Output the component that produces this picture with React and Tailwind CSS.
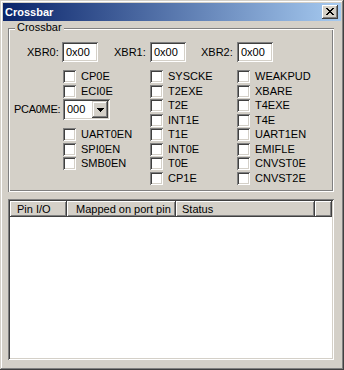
import React from 'react';

const SUNKEN = 'shadow-[inset_1px_1px_#808080,inset_-1px_-1px_#ffffff,inset_2px_2px_#404040,inset_-2px_-2px_#d4d0c8]';

function CloseGlyph() {
  return (
    <svg width="8" height="7" viewBox="0 0 8 7" shapeRendering="crispEdges">
      <g fill="#000">
        <rect x="0" y="0" width="2" height="1" />
        <rect x="6" y="0" width="2" height="1" />
        <rect x="1" y="1" width="2" height="1" />
        <rect x="5" y="1" width="2" height="1" />
        <rect x="2" y="2" width="4" height="1" />
        <rect x="3" y="3" width="2" height="1" />
        <rect x="2" y="4" width="4" height="1" />
        <rect x="1" y="5" width="2" height="1" />
        <rect x="5" y="5" width="2" height="1" />
        <rect x="0" y="6" width="2" height="1" />
        <rect x="6" y="6" width="2" height="1" />
      </g>
    </svg>
  );
}

function DownArrow() {
  return (
    <svg width="7" height="4" viewBox="0 0 7 4" shapeRendering="crispEdges">
      <g fill="#000">
        <rect x="0" y="0" width="7" height="1" />
        <rect x="1" y="1" width="5" height="1" />
        <rect x="2" y="2" width="3" height="1" />
        <rect x="3" y="3" width="1" height="1" />
      </g>
    </svg>
  );
}

function Box() {
  return (
    <span className="block w-[13px] h-[13px] shrink-0 bg-white shadow-[inset_1px_1px_#808080,inset_-1px_-1px_#ffffff,inset_2px_2px_#404040,inset_-2px_-2px_#d4d0c8]" />
  );
}

function Check({ label, tall }) {
  return (
    <div className={tall ? 'flex items-start h-[15px]' : 'flex items-start h-[14px]'}>
      <Box />
      <span className="ml-[5px] leading-[13px] whitespace-nowrap">{label}</span>
    </div>
  );
}

function Field({ value }) {
  return (
    <div className="w-[36px] h-[20px] bg-white pl-[4px] flex items-center leading-[13px] shadow-[inset_1px_1px_#808080,inset_-1px_-1px_#ffffff,inset_2px_2px_#404040,inset_-2px_-2px_#d4d0c8]">
      {value}
    </div>
  );
}

export default function App() {
  const col2 = ['SYSCKE', 'T2EXE', 'T2E', 'INT1E', 'T1E', 'INT0E', 'T0E', 'CP1E'];
  const col3 = ['WEAKPUD', 'XBARE', 'T4EXE', 'T4E', 'UART1EN', 'EMIFLE', 'CNVST0E', 'CNVST2E'];
  return (
    <div className="w-[344px] h-[370px] p-[3px] flex flex-col bg-[#d4d0c8] text-black text-[11px] font-['Liberation_Sans',Arial,sans-serif] shadow-[inset_-1px_-1px_#404040,inset_1px_1px_#d4d0c8,inset_-2px_-2px_#808080,inset_2px_2px_#ffffff]">
      {/* caption */}
      <div className="h-[18px] flex items-center pl-[2px] pr-[3px] bg-[linear-gradient(to_right,#0a246a,#a6caf0)]">
        <span className="text-white font-bold leading-[13px] flex-1">Crossbar</span>
        <div className="w-[16px] h-[14px] bg-[#d4d0c8] flex items-start pl-[4px] pt-[3px] shadow-[inset_-1px_-1px_#404040,inset_1px_1px_#ffffff,inset_-2px_-2px_#808080,inset_2px_2px_#d4d0c8]">
          <CloseGlyph />
        </div>
      </div>

      {/* client */}
      <div className="flex-1 pl-[5px] pt-[7px]">
        {/* group box */}
        <div className="relative w-[326px] h-[164px] shadow-[inset_1px_1px_#808080,inset_-1px_-1px_#ffffff,inset_2px_2px_#ffffff,inset_-2px_-2px_#808080]">
          <span className="absolute left-[7px] top-[-7px] px-[2px] bg-[#d4d0c8] leading-[13px]">Crossbar</span>

          <div className="pt-[14px]">
            <div className="flex items-center h-[20px]">
              <span className="ml-[19px] w-[35px] leading-[13px]">XBR0:</span>
              <Field value="0x00" />
              <span className="ml-[16px] w-[36px] leading-[13px]">XBR1:</span>
              <Field value="0x00" />
              <span className="ml-[15px] w-[36px] leading-[13px]">XBR2:</span>
              <Field value="0x00" />
            </div>

            <div className="flex mt-[8px]">
              <div className="w-[142px] flex flex-col">
                <div className="pl-[55px]">
                  <Check label="CP0E" tall />
                  <Check label="ECI0E" />
                </div>
                <div className="flex items-center h-[21px] mb-[8px]">
                  <span className="ml-[6px] w-[49px] leading-[13px] whitespace-nowrap tracking-[-0.3px]">PCA0ME:</span>
                  <div className="w-[47px] h-[21px] bg-white flex items-center p-[2px] shadow-[inset_1px_1px_#808080,inset_-1px_-1px_#ffffff,inset_2px_2px_#404040,inset_-2px_-2px_#d4d0c8]">
                    <span className="flex-1 pl-[2px] leading-[13px]">000</span>
                    <div className="w-[16px] h-[17px] bg-[#d4d0c8] flex items-center justify-center shadow-[inset_-1px_-1px_#404040,inset_1px_1px_#d4d0c8,inset_-2px_-2px_#808080,inset_2px_2px_#ffffff]">
                      <DownArrow />
                    </div>
                  </div>
                </div>
                <div className="pl-[55px]">
                  <Check label="UART0EN" tall />
                  <Check label="SPI0EN" />
                  <Check label="SMB0EN" tall />
                </div>
              </div>
              <div className="w-[87px] flex flex-col">
                {col2.map((l, i) => (
                  <Check key={l} label={l} tall={i % 2 === 0} />
                ))}
              </div>
              <div className="flex flex-col">
                {col3.map((l, i) => (
                  <Check key={l} label={l} tall={i % 2 === 0} />
                ))}
              </div>
            </div>
          </div>
        </div>

        {/* list view */}
        <div className={'mt-[7px] w-[326px] h-[161px] bg-white p-[2px] flex flex-col ' + SUNKEN}>
          <div className="flex h-[16px] bg-[#d4d0c8]">
            <div className="w-[57px] h-full flex items-center pl-[7px] leading-[13px] whitespace-nowrap shadow-[inset_-1px_-1px_#404040,inset_1px_1px_#ffffff,inset_-2px_-2px_#808080]">Pin I/O</div>
            <div className="w-[109px] h-full flex items-center pl-[9px] leading-[13px] whitespace-nowrap shadow-[inset_-1px_-1px_#404040,inset_1px_1px_#ffffff,inset_-2px_-2px_#808080]">Mapped on port pin</div>
            <div className="w-[139px] h-full flex items-center pl-[6px] leading-[13px] whitespace-nowrap shadow-[inset_-1px_-1px_#404040,inset_1px_1px_#ffffff,inset_-2px_-2px_#808080]">Status</div>
            <div className="flex-1 h-full shadow-[inset_-1px_-1px_#404040,inset_1px_1px_#ffffff,inset_-2px_-2px_#808080]" />
          </div>
          <div className="flex-1 bg-white" />
        </div>
      </div>
    </div>
  );
}
